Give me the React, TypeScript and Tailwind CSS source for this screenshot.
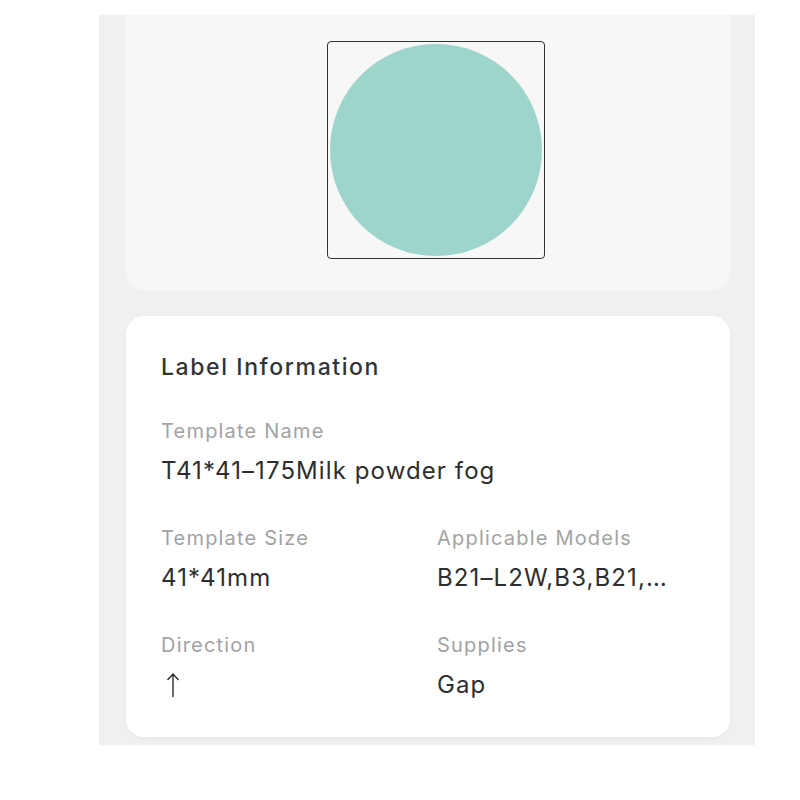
const Field = ({ label, value }: { label: string; value: React.ReactNode }) => {
    return (
        <div className="flex flex-col gap-y-[10px] min-w-0">
            <p className="text-[20px] leading-[28px] tracking-[1.2px] text-[#a3a3a3]">{label}</p>
            <div className="text-[24px] leading-[32px] tracking-[1.1px] text-[#2e2e2e] whitespace-nowrap">{value}</div>
        </div>
    );
};

//thin up arrow used for direction
const UpArrow = () => {
    return (
        <svg width="14" height="32" viewBox="0 0 14 32" className="ml-[5px]">
            <path d="M7 28V5M1.5 11L7 5l5.5 6" fill="none" stroke="#2e2e2e" strokeWidth="1.4" />
        </svg>
    );
};

const App = () => {
    return (
        <div className="w-[800px] h-[800px] bg-white font-['Inter','Liberation_Sans',sans-serif]">
            <div className="ml-[99px] pt-[15px]">
                <div className="w-[656px] h-[730px] bg-[#f0f0f0] overflow-hidden pl-[27px] pr-[25px]">
                    {/* preview card, scrolled partly out of view */}
                    <div className="-mt-[20px] h-[295px] bg-[#f7f7f7] rounded-[18px] pl-[201px] pt-[46px]">
                        <div className="w-[218px] h-[218px] border-[1.5px] border-[#333] rounded-[4px] flex items-center justify-center">
                            <div className="w-[212px] h-[212px] rounded-full bg-[#9dd5cb]" />
                        </div>
                    </div>

                    {/* label information */}
                    <div className="mt-[26px] h-[421px] bg-white rounded-[18px] shadow-[0_2px_10px_rgba(0,0,0,0.03)] px-[35px] pt-[36px]">
                        <p className="text-[23px] leading-[30px] tracking-[1.6px] font-medium text-[#333]">Label Information</p>
                        <div className="mt-[35px] flex flex-col gap-y-[37px]">
                            <Field label="Template Name" value="T41*41–175Milk powder fog" />
                            <div className="grid grid-cols-[276px_1fr] gap-y-[37px]">
                                <Field label="Template Size" value="41*41mm" />
                                <Field label="Applicable Models" value="B21–L2W,B3,B21,…" />
                                <Field label="Direction" value={<UpArrow />} />
                                <Field label="Supplies" value="Gap" />
                            </div>
                        </div>
                    </div>
                </div>
            </div>
        </div>
    );
};

export default App;
